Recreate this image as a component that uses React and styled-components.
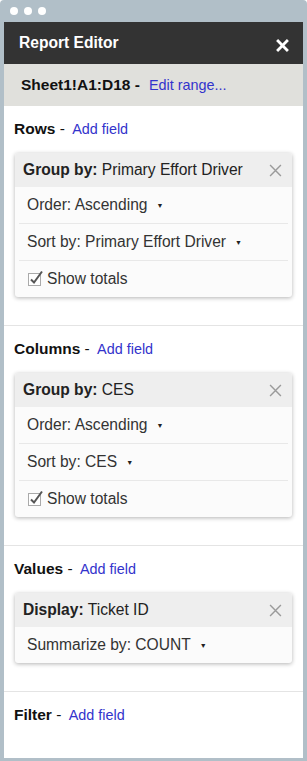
import React from 'react'
import styled, { createGlobalStyle } from 'styled-components'

const sections = [
  {
    title: 'Rows',
    cards: [
      {
        label: 'Group by:',
        value: 'Primary Effort Driver',
        rows: ['Order: Ascending', 'Sort by: Primary Effort Driver'],
        totals: true,
      },
    ],
  },
  {
    title: 'Columns',
    cards: [
      {
        label: 'Group by:',
        value: 'CES',
        rows: ['Order: Ascending', 'Sort by: CES'],
        totals: true,
      },
    ],
  },
  {
    title: 'Values',
    cards: [{ label: 'Display:', value: 'Ticket ID', rows: ['Summarize by: COUNT'] }],
  },
  { title: 'Filter', cards: [] },
]

const CloseIcon = ({ size = 13, stroke = '#fff', width = 2.6 }) => (
  <svg width={size} height={size} viewBox="0 0 12 12">
    <path d="M1 1L11 11M11 1L1 11" stroke={stroke} strokeWidth={width} strokeLinecap="butt" />
  </svg>
)

const CheckIcon = () => (
  <CheckWrap>
    <svg width="16" height="16" viewBox="0 0 16 16">
      <rect x="0.5" y="3.5" width="12" height="12" fill="#fff" stroke="#aaa" />
      <path d="M3 9.5L6 12.5L14 1.5" fill="none" stroke="#555" strokeWidth="2" />
    </svg>
  </CheckWrap>
)

const App = () => (
  <>
    <GlobalStyle />
    <Frame>
      <Chrome>
        <Dot />
        <Dot />
        <Dot />
      </Chrome>
      <Panel>
        <Header>
          <span>Report Editor</span>
          <CloseIcon />
        </Header>
        <Range>
          <b>Sheet1!A1:D18 -</b>
          <Link>Edit range...</Link>
        </Range>
        {sections.map((s, i) => (
          <Section key={s.title} last={i === sections.length - 1}>
            <Heading>
              <b>{s.title}</b> - <Link>Add field</Link>
            </Heading>
            {s.cards.map((c) => (
              <Card key={c.label}>
                <CardHead>
                  <span>
                    <b>{c.label}</b> {c.value}
                  </span>
                  <CloseIcon size={13} stroke="#9a9a9a" width={1.3} />
                </CardHead>
                {c.rows.map((r) => (
                  <Row key={r}>
                    {r}
                    <Caret>▼</Caret>
                  </Row>
                ))}
                {c.totals && (
                  <Row>
                    <CheckIcon />
                    Show totals
                  </Row>
                )}
              </Card>
            ))}
          </Section>
        ))}
      </Panel>
    </Frame>
  </>
)

const GlobalStyle = createGlobalStyle`
  body {
    margin: 0;
    font-family: "Liberation Sans", Arial, sans-serif;
    background: #fff;
  }
`

const Frame = styled.div`
  width: 307px;
  height: 761px;
  box-sizing: border-box;
  background: #b1bfc8;
  border-radius: 4px 4px 0 0;
  padding: 0 4px 3px 4px;
  display: flex;
  flex-direction: column;
`

const Chrome = styled.div`
  height: 22px;
  display: flex;
  align-items: center;
  gap: 6px;
  padding-left: 6px;
`

const Dot = styled.span`
  width: 8px;
  height: 8px;
  border-radius: 50%;
  background: #fff;
`

const Panel = styled.div`
  flex: 1;
  background: #fff;
  display: flex;
  flex-direction: column;
  overflow: hidden;
`

const Header = styled.div`
  height: 42px;
  background: #333;
  color: #fff;
  font-size: 15.6px;
  font-weight: bold;
  display: flex;
  align-items: center;
  justify-content: space-between;
  padding: 0 14px 0 15px;

  svg {
    margin-top: 5px;
  }
`

const Range = styled.div`
  height: 42px;
  background: #e0e0dc;
  display: flex;
  align-items: center;
  padding-left: 17px;
  font-size: 15.5px;
  color: #111;

  b {
    margin-right: 6px;
  }
`

const Link = styled.span`
  color: #3333cc;
  font-size: 14.4px;
  margin-left: 3px;
`

const Section = styled.div`
  padding: 14px 10px ${(p) => (p.last ? '0' : '28px')} 10px;
  border-bottom: ${(p) => (p.last ? 'none' : '1px solid #e4e4e4')};
`

const Heading = styled.div`
  font-size: 15.5px;
  line-height: 18px;
  color: #111;
`

const Card = styled.div`
  margin: 15px 1px 0 1px;
  border-radius: 3px;
  background: #fbfbfb;
  box-shadow: 0 1px 4px rgba(0, 0, 0, 0.3);
  overflow: hidden;
`

const CardHead = styled.div`
  height: 34px;
  background: #eee;
  display: flex;
  align-items: center;
  justify-content: space-between;
  padding: 0 10px 0 8px;
  font-size: 15.6px;
  color: #222;
`

const Row = styled.div`
  height: 36px;
  margin: 0 4px;
  padding-left: 8px;
  display: flex;
  align-items: center;
  font-size: 15.6px;
  color: #333;

  & + & {
    border-top: 1px solid #e8e8e8;
  }
`

const Caret = styled.span`
  font-size: 7px;
  margin-left: 9px;
  color: #222;
`

const CheckWrap = styled.span`
  display: inline-flex;
  margin: -3px 3px 0 1px;
`

export default App
